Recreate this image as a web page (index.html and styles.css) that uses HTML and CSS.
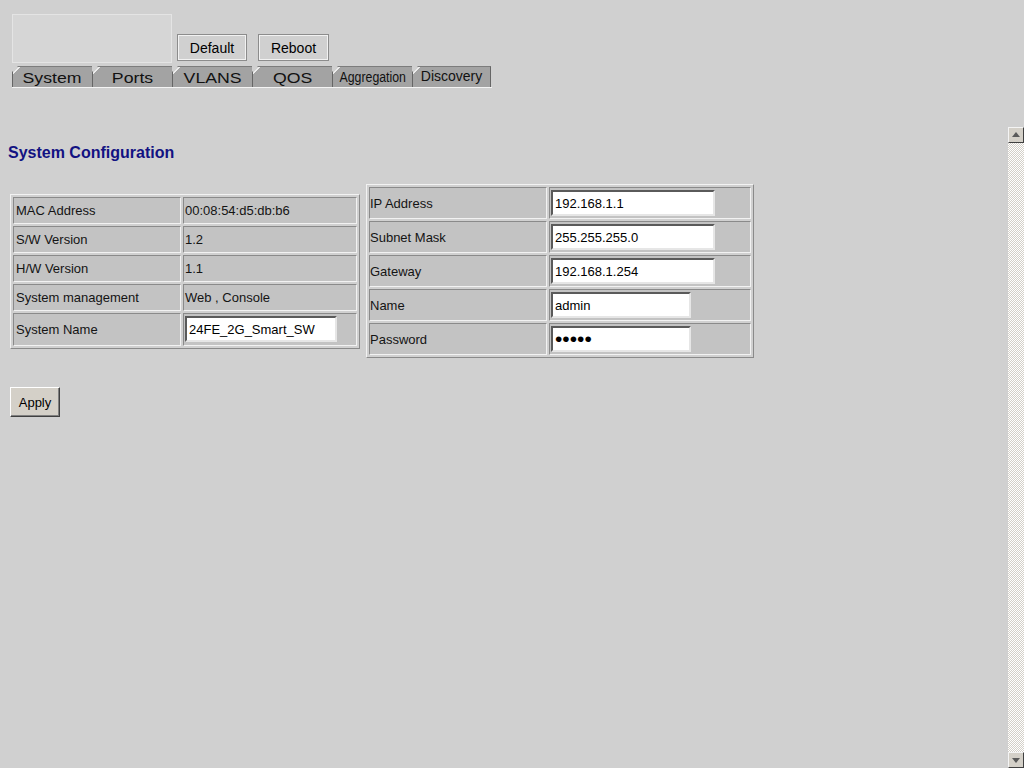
FILE: index.html
```html
<!DOCTYPE html>
<html>
<head>
<meta charset="utf-8">
<title>System Configuration</title>
<link rel="stylesheet" href="styles.css">
</head>
<body>
<div class="top">
  <div class="head-row">
    <div class="logo"></div>
    <button class="hbtn">Default</button>
    <button class="hbtn">Reboot</button>
  </div>
  <div class="tabs">
    <div class="tab"><span>System</span></div>
    <div class="tab"><span>Ports</span></div>
    <div class="tab"><span>VLANS</span></div>
    <div class="tab"><span>QOS</span></div>
    <div class="tab tab-small"><span>Aggregation</span></div>
    <div class="tab tab-mid"><span>Discovery</span></div>
  </div>
</div>
<div class="frame">
  <div class="content">
    <h3 class="title">System Configuration</h3>
    <div class="forms">
      <table class="cfg cfg-left">
        <tr><td class="lbl">MAC Address</td><td class="val">00:08:54:d5:db:b6</td></tr>
        <tr><td class="lbl">S/W Version</td><td class="val">1.2</td></tr>
        <tr><td class="lbl">H/W Version</td><td class="val">1.1</td></tr>
        <tr><td class="lbl">System management</td><td class="val">Web , Console</td></tr>
        <tr class="tall"><td class="lbl">System Name</td><td class="val"><input class="field f-name" type="text" value="24FE_2G_Smart_SW"></td></tr>
      </table>
      <table class="cfg cfg-right">
        <tr><td class="lbl">IP Address</td><td class="val"><input class="field f-wide" type="text" value="192.168.1.1"></td></tr>
        <tr><td class="lbl">Subnet Mask</td><td class="val"><input class="field f-wide" type="text" value="255.255.255.0"></td></tr>
        <tr><td class="lbl">Gateway</td><td class="val"><input class="field f-wide" type="text" value="192.168.1.254"></td></tr>
        <tr><td class="lbl">Name</td><td class="val"><input class="field f-narrow" type="text" value="admin"></td></tr>
        <tr><td class="lbl">Password</td><td class="val"><input class="field f-narrow f-pass" type="password" value="admin"></td></tr>
      </table>
    </div>
    <button class="apply">Apply</button>
  </div>
  <div class="scrollbar">
    <div class="sb-btn sb-up"></div>
    <div class="sb-track"></div>
    <div class="sb-btn sb-down"></div>
  </div>
</div>
</body>
</html>
```
FILE: styles.css
```css
html, body {
  margin: 0;
  padding: 0;
  background: #d0d0d0;
  font-family: "Liberation Sans", Arial, sans-serif;
  color: #000;
  overflow: hidden;
}

.top {
  height: 127px;
  box-sizing: border-box;
  padding: 14px 0 0 12px;
}

.head-row {
  display: flex;
  align-items: flex-end;
}

.logo {
  width: 160px;
  height: 49px;
  box-sizing: border-box;
  background: #d6d6d6;
  border: 1px solid #e4e4e4;
}

.hbtn {
  margin: 0 0 2px 5px;
  width: 70px;
  height: 27px;
  box-sizing: border-box;
  background: #d0d0d0;
  border: 1px solid #8c8c8c;
  box-shadow: inset 1px 1px 0 #f2f2f2, inset -1px -1px 0 #f2f2f2;
  font-family: "Liberation Sans", Arial, sans-serif;
  font-size: 14px;
  color: #000;
  padding: 0;
}

.hbtn + .hbtn {
  margin-left: 11px;
  width: 71px;
}

.tabs {
  display: flex;
  margin-top: 3px;
  width: 480px;
  border-bottom: 1px solid #f4f4f4;
}

.tab {
  width: 80px;
  height: 21px;
  box-sizing: border-box;
  background: linear-gradient(135deg, #d0d0d0 0 4.2px, #ececec 4.2px 5.2px, #a3a3a3 5.2px);
  border-top: 1px solid #7c7c7c;
  border-left: 1px solid #666;
  clip-path: polygon(0 6px, 6px 0, 100% 0, 100% 100%, 0 100%);
  text-align: center;
  font-size: 15px;
  line-height: 19px;
  padding-top: 1px;
  overflow: hidden;
  color: #111;
}

.tab span {
  display: inline-block;
  transform: scaleX(1.18);
}

.tab:last-child {
  width: 79px;
  border-right: 1px solid #666;
}

.tab-small {
  font-size: 14px;
}

.tab-small span {
  transform: scaleX(0.88);
}

.tab-mid {
  font-size: 14px;
  line-height: 17px;
}

.tab-mid span {
  transform: none;
}

.frame {
  display: flex;
  height: 641px;
}

.content {
  flex: 1;
  padding: 16px 0 0 8px;
}

.title {
  margin: 0;
  font-size: 16px;
  line-height: 20px;
  font-weight: bold;
  color: #121282;
}

.forms {
  display: flex;
  align-items: center;
  gap: 6px;
  margin: 21px 0 0 2px;
}

.cfg {
  border-collapse: separate;
  border-spacing: 2px;
  table-layout: fixed;
  border: 1px solid;
  border-color: #f2f2f2 #8a8a8a #8a8a8a #f2f2f2;
  font-size: 13px;
}

.cfg td {
  box-sizing: border-box;
  background: #c3c3c3;
  border: 1px solid;
  border-color: #8a8a8a #f2f2f2 #f2f2f2 #8a8a8a;
  padding: 0 0 0 1px;
  vertical-align: middle;
  white-space: nowrap;
  color: #141414;
}

.cfg-left td.lbl {
  padding-left: 2px;
}

.cfg-right td.lbl {
  padding-left: 0;
}

.cfg-left {
  width: 350px;
}

.cfg-left td {
  height: 27px;
}

.cfg-left tr.tall td {
  height: 33px;
}

.cfg-left .lbl {
  width: 168px;
}

.cfg-left .val {
  width: 174px;
}

.cfg-right {
  width: 388px;
}

.cfg-right td {
  height: 32px;
}

.cfg-right .lbl {
  width: 178px;
}

.cfg-right .val {
  width: 202px;
}

.field {
  display: block;
  box-sizing: border-box;
  height: 26px;
  margin: 0;
  padding: 0 2px;
  background: #fff;
  border: 2px solid;
  border-color: #5a5a5a #e6e6e6 #e6e6e6 #5a5a5a;
  font-family: "Liberation Sans", Arial, sans-serif;
  font-size: 13px;
  color: #000;
  outline: none;
}

.f-name {
  width: 152px;
}

.f-wide {
  width: 164px;
}

.f-narrow {
  width: 140px;
}

.f-pass {
  font-size: 21px;
  letter-spacing: 0;
}

.apply {
  margin: 29px 0 0 2px;
  width: 50px;
  height: 30px;
  box-sizing: border-box;
  padding: 0;
  background: #d4d0c8;
  border: 1px solid;
  border-color: #ffffff #404040 #404040 #ffffff;
  box-shadow: inset -1px -1px 0 #808080;
  font-family: "Liberation Sans", Arial, sans-serif;
  font-size: 13px;
  color: #000;
}

.scrollbar {
  width: 16px;
  display: flex;
  flex-direction: column;
}

.sb-btn {
  height: 16px;
  box-sizing: border-box;
  background: #d4d0c8;
  border: 1px solid;
  border-color: #f4f4f4 #404040 #404040 #f4f4f4;
  position: relative;
}

.sb-btn::after {
  content: "";
  position: absolute;
  left: 3px;
  width: 0;
  height: 0;
  border-left: 4px solid transparent;
  border-right: 4px solid transparent;
}

.sb-up::after {
  top: 4px;
  border-bottom: 5px solid #5a5a5a;
}

.sb-down::after {
  top: 5px;
  border-top: 5px solid #5a5a5a;
}

.sb-track {
  flex: 1;
  background-color: #d4d0c8;
  background-image: conic-gradient(#ffffff 25%, #d4d0c8 0 50%, #ffffff 0 75%, #d4d0c8 0);
  background-size: 2px 2px;
}
```
